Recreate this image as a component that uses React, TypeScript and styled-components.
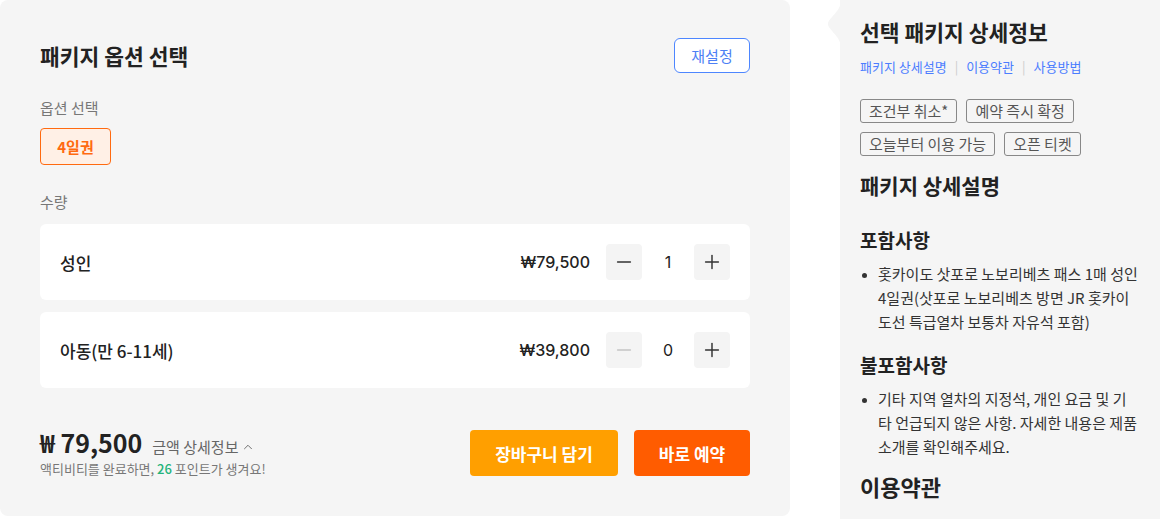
import React from 'react';
import styled, { createGlobalStyle } from 'styled-components';
import { Minus, Plus, ChevronUp } from 'lucide-react';

const GlobalStyle = createGlobalStyle`
  body {
    margin: 0;
    background: #ffffff;
    font-family: "Noto Sans CJK KR", "Noto Sans", sans-serif;
    color: #222;
  }
  * { box-sizing: border-box; }
`;

const numFont = `"Inter", "Noto Sans CJK KR", sans-serif`;

const Page = styled.div`
  display: flex;
  align-items: flex-start;
  width: 1160px;
  height: 519px;
  overflow: hidden;
`;

const OptionPanel = styled.section`
  width: 790px;
  height: 516px;
  background: #f5f5f5;
  border-radius: 8px;
  padding: 38px 40px 40px;
  display: flex;
  flex-direction: column;
`;

const HeaderRow = styled.div`
  display: flex;
  align-items: center;
  justify-content: space-between;
  height: 35px;
`;

const Title = styled.h2`
  margin: 0;
  font-size: 21.5px;
  font-weight: 700;
  color: #222;
`;

const ResetButton = styled.button`
  width: 76px;
  height: 35px;
  border: 1px solid #4d86ff;
  border-radius: 6px;
  background: #fff;
  color: #4d7ff5;
  font-family: inherit;
  font-size: 15px;
`;

const Label = styled.div<{ $top: number }>`
  margin-top: ${(p) => p.$top}px;
  font-size: 15px;
  line-height: 20px;
  color: #777;
`;

const Chip = styled.button`
  margin-top: 10px;
  align-self: flex-start;
  flex-shrink: 0;
  width: 71px;
  height: 37px;
  border: 1px solid #ff6a10;
  border-radius: 4px;
  background: #fff0e6;
  color: #ff6a10;
  font-family: inherit;
  font-size: 15px;
  font-weight: 700;
`;

const Rows = styled.div`
  margin-top: 12px;
  display: flex;
  flex-direction: column;
  gap: 12px;
`;

const Row = styled.div`
  height: 76px;
  flex-shrink: 0;
  background: #fff;
  border-radius: 6px;
  display: flex;
  align-items: center;
  padding: 0 20px;
`;

const RowName = styled.div`
  flex: 1;
  font-size: 17px;
  font-weight: 500;
  color: #222;
`;

const RowPrice = styled.div`
  font-family: ${numFont};
  font-size: 16px;
  font-weight: 500;
  color: #222;
  margin-right: 16px;
`;

const StepButton = styled.button<{ $disabled?: boolean }>`
  width: 36px;
  height: 36px;
  border: none;
  border-radius: 4px;
  background: #f4f4f4;
  color: ${(p) => (p.$disabled ? '#c4c4c4' : '#333')};
  display: flex;
  align-items: center;
  justify-content: center;
  padding: 0;
`;

const Count = styled.div`
  width: 52px;
  text-align: center;
  font-family: ${numFont};
  font-size: 16px;
  color: #222;
`;

const Footer = styled.div`
  margin-top: 40px;
  display: flex;
  align-items: center;
`;

const Summary = styled.div`
  flex: 1;
  display: flex;
  flex-direction: column;
`;

const TotalLine = styled.div`
  display: flex;
  align-items: baseline;
  gap: 10px;
`;

const Total = styled.div`
  font-size: 25px;
  font-weight: 700;
  line-height: 28px;
  color: #222;
`;

const DetailToggle = styled.span`
  display: inline-flex;
  align-items: center;
  gap: 3px;
  font-size: 15px;
  color: #666;
`;

const PointNote = styled.div`
  margin-top: 2px;
  font-size: 13px;
  color: #777;

  b {
    font-weight: 500;
    color: #23b37a;
  }
`;

const ActionButton = styled.button<{ $bg: string; $w: number }>`
  width: ${(p) => p.$w}px;
  height: 46px;
  margin-left: 16px;
  border: none;
  border-radius: 4px;
  background: ${(p) => p.$bg};
  color: #fff;
  font-family: inherit;
  font-size: 17px;
  font-weight: 700;
`;

const DetailPanel = styled.aside`
  position: relative;
  margin-left: 50px;
  width: 320px;
  height: 519px;
  background: #f5f5f5;
  padding: 18px 20px 0;
`;

const Tail = styled.svg`
  position: absolute;
  left: -12px;
  top: 0;
`;

const DetailTitle = styled.h2`
  margin: 0;
  font-size: 21.5px;
  font-weight: 700;
  line-height: 28px;
  color: #222;
`;

const Links = styled.div`
  margin-top: 11px;
  display: flex;
  align-items: center;
  font-size: 13px;
  color: #4c7dff;
`;

const Sep = styled.span`
  color: #ccc;
  margin: 0 8px;
`;

const Tags = styled.div`
  margin-top: 23px;
  display: flex;
  flex-wrap: wrap;
  gap: 9px 9px;
`;

const Tag = styled.span`
  height: 24px;
  line-height: 22px;
  padding: 0 8px;
  border: 1px solid #888;
  border-radius: 3px;
  font-size: 15px;
  color: #555;
`;

const Heading = styled.h3<{ $size: number; $top: number }>`
  margin: ${(p) => p.$top}px 0 0;
  font-size: ${(p) => p.$size}px;
  font-weight: 700;
  line-height: 28px;
  color: #222;
`;

const Bullets = styled.ul`
  margin: 8px 0 0;
  padding-left: 18px;
  font-size: 15px;
  line-height: 24px;
  color: #333;

  li::marker {
    font-size: 12px;
  }
`;

const items = [
  { name: '성인', price: '₩79,500', count: 1 },
  { name: '아동(만 6-11세)', price: '₩39,800', count: 0 },
];

export default function App() {
  return (
    <>
      <GlobalStyle />
      <Page>
        <OptionPanel>
          <HeaderRow>
            <Title>패키지 옵션 선택</Title>
            <ResetButton>재설정</ResetButton>
          </HeaderRow>

          <Label $top={25}>옵션 선택</Label>
          <Chip>4일권</Chip>

          <Label $top={27}>수량</Label>
          <Rows>
            {items.map((it) => (
              <Row key={it.name}>
                <RowName>{it.name}</RowName>
                <RowPrice>{it.price}</RowPrice>
                <StepButton $disabled={it.count === 0}>
                  <Minus size={22} strokeWidth={1.6} />
                </StepButton>
                <Count>{it.count}</Count>
                <StepButton>
                  <Plus size={22} strokeWidth={1.6} />
                </StepButton>
              </Row>
            ))}
          </Rows>

          <Footer>
            <Summary>
              <TotalLine>
                <Total>₩ 79,500</Total>
                <DetailToggle>
                  금액 상세정보 <ChevronUp size={14} strokeWidth={1.6} />
                </DetailToggle>
              </TotalLine>
              <PointNote>
                액티비티를 완료하면, <b>26</b> 포인트가 생겨요!
              </PointNote>
            </Summary>
            <ActionButton $bg="#ff9f00" $w={148}>장바구니 담기</ActionButton>
            <ActionButton $bg="#ff5c00" $w={116}>바로 예약</ActionButton>
          </Footer>
        </OptionPanel>

        <DetailPanel>
          <Tail width="13" height="48" viewBox="0 0 13 48">
            <path d="M13 0 C13 12 0 18 0 24 C0 30 13 36 13 48 Z" fill="#f5f5f5" />
          </Tail>
          <DetailTitle>선택 패키지 상세정보</DetailTitle>
          <Links>
            <span>패키지 상세설명</span>
            <Sep>|</Sep>
            <span>이용약관</span>
            <Sep>|</Sep>
            <span>사용방법</span>
          </Links>
          <Tags>
            <Tag>조건부 취소*</Tag>
            <Tag>예약 즉시 확정</Tag>
            <Tag>오늘부터 이용 가능</Tag>
            <Tag>오픈 티켓</Tag>
          </Tags>

          <Heading $size={21} $top={15}>패키지 상세설명</Heading>

          <Heading $size={19} $top={27}>포함사항</Heading>
          <Bullets>
            <li>홋카이도 삿포로 노보리베츠 패스 1매 성인 4일권(삿포로 노보리베츠 방면 JR 홋카이도선 특급열차 보통차 자유석 포함)</li>
          </Bullets>

          <Heading $size={19} $top={17}>불포함사항</Heading>
          <Bullets>
            <li>기타 지역 열차의 지정석, 개인 요금 및 기타 언급되지 않은 사항. 자세한 내용은 제품 소개를 확인해주세요.</li>
          </Bullets>

          <Heading $size={22} $top={13}>이용약관</Heading>
        </DetailPanel>
      </Page>
    </>
  );
}
